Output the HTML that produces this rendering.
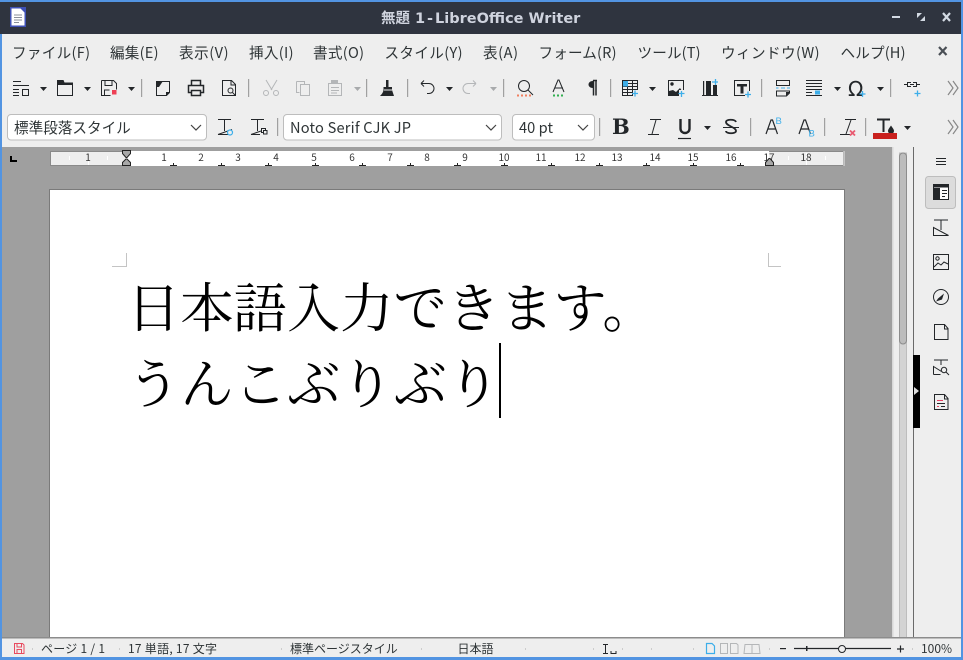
<!DOCTYPE html>
<html lang="ja"><head><meta charset="utf-8"><title>無題 1 - LibreOffice Writer</title>
<style>
html,body{margin:0;padding:0;background:#eee;width:963px;height:660px;overflow:hidden}
svg{display:block}
.m{font-family:"Noto Sans CJK JP",sans-serif;font-size:14.6px;fill:#2e3436}
.c{font-family:"Noto Sans CJK JP",sans-serif;font-size:14.6px;fill:#2e3436}
.s{font-family:"Noto Sans CJK JP",sans-serif;font-size:12px;fill:#2e3436}
.r{font-family:"Noto Sans CJK JP",sans-serif;font-size:10px;fill:#333;text-anchor:middle}
.d{font-family:"Noto Serif CJK JP","Noto Serif CJK SC",serif;font-size:53.3px;fill:#000}
.k{fill:none;stroke:#232629;stroke-width:1}
.g{fill:none;stroke:#b4b6b8;stroke-width:1}
.b{fill:none;stroke:#3daee9;stroke-width:1.3}
</style></head><body>
<svg width="963" height="660" viewBox="0 0 963 660" xmlns="http://www.w3.org/2000/svg">
<defs>
<path id="ar" d="M0 0h7l-3.500 4z" fill="#232629"/>
<path id="ag" d="M0 0h7l-3.500 4z" fill="#a8aaac"/>
</defs>
<rect width="963" height="660" fill="#eeeeee"/>
<!-- title -->
<rect x="0" y="2" width="963" height="32" fill="#2f343f"/>
<rect x="10" y="7" width="16" height="20" fill="#3f51b5"/><path d="M11.500 8.500h9l4 4v13h-13z" fill="#fff"/>
<path d="M14 15h8M14 17.500h8M14 20h8M14 22.500h5" stroke="#8a8f98" stroke-width="1"/>
<text x="381" y="23" class="m" style="font-size:14.5px;fill:#cfd3de;font-weight:bold">無題</text>
<text x="415" y="23" style="font-family:'DejaVu Sans',sans-serif;font-weight:bold;font-size:14.5px;fill:#cfd3de">1</text>
<text x="427" y="23" style="font-family:'DejaVu Sans',sans-serif;font-weight:bold;font-size:14.5px;fill:#cfd3de">-</text>
<text x="435" y="23" style="font-family:'DejaVu Sans',sans-serif;font-weight:bold;font-size:14.5px;fill:#cfd3de">LibreOffice Writer</text>
<rect x="892" y="16" width="8" height="2" fill="#d3dae3"/>
<path d="M917 13h5l-5 5zM925 21h-5l5-5z" fill="#d3dae3"/>
<path d="M943 13l7 8M950 13l-7 8" stroke="#d3dae3" stroke-width="2.200"/>
<!-- menu -->
<g class="m">
<text x="12" y="58" textLength="78">ファイル(F)</text><text x="110" y="58" textLength="48.500">編集(E)</text><text x="179" y="58" textLength="49.500">表示(V)</text><text x="249" y="58" textLength="44.500">挿入(I)</text><text x="313" y="58" textLength="51">書式(O)</text><text x="384.500" y="58" textLength="78">スタイル(Y)</text><text x="483" y="58" textLength="35">表(A)</text><text x="538.500" y="58" textLength="78">フォーム(R)</text><text x="637.500" y="58" textLength="63">ツール(T)</text><text x="721" y="58" textLength="98.500">ウィンドウ(W)</text><text x="840.500" y="58" textLength="65">ヘルプ(H)</text>
</g>
<path d="M939 47l7.500 8M946.500 47l-7.500 8" stroke="#4a4f55" stroke-width="2.200"/>
<!-- toolbar 1 -->
<g class="k">
<path d="M13 81.500h8M13 85.500h16M13 89.500h6M13 92.500h6M13 95.500h6M22.500 89.500h6v6h-6z"/>
<path d="M57.500 84.500v11h15v-11"/>
<path d="M101.500 80.500h12l3 3v6M101.500 80.500v15h9M105 81v4.500h7V81M104.500 95v-5h5"/>
<path d="M156.500 81.500h13v11l-3 3h-10z"/>
</g>
<path d="M57 80h6.500l1 2.500H73v2.500H57z" fill="#232629"/>
<rect x="112" y="90" width="4.500" height="4.500" fill="#ee4055"/>
<path d="M156 81h7l-4 6h-3z" fill="#232629"/><path d="M166 96l4-4h-4z" fill="#232629"/>
<use href="#ar" x="40" y="87"/><use href="#ar" x="84" y="87"/><use href="#ar" x="128" y="87"/>
<g class="k">
<path d="M191.500 85v-4.500h9V85M191.500 92.500h-3v-7h15v7h-3M191.500 90.500h9v5h-9z" stroke-width="1.500"/>
<path d="M222.500 80.500h9l4 4v11h-13zM231 81v4h4"/><circle cx="230.500" cy="90.500" r="2.500"/><path d="M232.500 92.500l3 3"/>
</g>
<g class="g">
<path d="M266 80l6 10M277 80l-6 10"/><circle cx="266" cy="93" r="2.500"/><circle cx="276" cy="93" r="2.500"/>
<path d="M296.500 81.500h8v3M296.500 81.500v11h3M300.500 84.500h9v11h-9z"/>
<path d="M328.500 83.500h13v12h-13zM331 87.500h8M331 90.500h8M331 93h6"/>
</g>
<rect x="331" y="80" width="7" height="3" fill="#b4b6b8"/>
<use href="#ag" x="354" y="87"/>
<path d="M386 80h2.500v7H392v3l2 6h-14c1.500-1.500 3-3 3.500-6v-3H386z" fill="#232629"/><rect x="384" y="89.500" width="8" height="1" fill="#eee"/>
<path class="k" d="M421 83.500h8a4.500 4.500 0 0 1 0 10h-2M421 83.500l3-3M421 83.500l3 3"/>
<use href="#ar" x="446" y="87"/>
<path class="g" d="M476 83.500h-8a4.500 4.500 0 0 0 0 10h2M476 83.500l-3-3M476 83.500l-3 3"/>
<use href="#ag" x="490" y="87"/>
<circle class="k" cx="524" cy="86" r="5.500"/><path class="k" d="M528 90l5 5"/>
<path d="M517 95.500h2M521 95.500h2M525 95.500h2M529 95.500h2" stroke="#f08060" stroke-width="2"/>
<path class="k" d="M553 92l5-12h1l5 12M555 88h8"/>
<path d="M553 95.500h2M557 95.500h2M561 95.500h2" stroke="#30b050" stroke-width="2"/>
<path d="M593 80.500h4M593.500 80.500v15M596 80.500v15" stroke="#232629" stroke-width="1.500"/><path d="M593 81c-6 0-6 7 0 7z" fill="#232629"/>
<path class="k" d="M622.500 80.500h15v15h-15zM622 83.500h16M622 86.500h16M622 89.500h16M622 92.500h16M627.500 80v16M632.500 80v16"/>
<rect x="623" y="81" width="5" height="5.500" fill="#3daee9"/>
<rect x="633" y="90" width="6" height="7" fill="#eee"/><path class="b" d="M632 93.500h6M635 90.500v6"/>
<use href="#ar" x="649" y="87"/>
<rect x="668.500" y="80.500" width="15" height="15" class="k"/><circle cx="672" cy="84" r="1.700" fill="#232629"/><path d="M669 96v-5l4-1 3 2 4-4 2 3-2 3-2 2z" fill="#232629"/>
<rect x="679" y="90" width="6" height="7" fill="#eee"/><path class="b" d="M678.500 93.500h6M681.500 91v6"/>
<path d="M702 95.500h16" stroke="#232629" stroke-width="1"/><rect x="703" y="81" width="1.200" height="14" fill="#232629"/><rect x="706" y="81" width="5" height="14" fill="#232629"/><rect x="713" y="85" width="4" height="10" fill="#232629"/>
<path class="b" d="M712 82h6M715.500 79v6"/>
<rect x="734.500" y="80.500" width="15" height="15" class="k"/><path d="M737 84h10v2.500h-3.500v7h-3v-7H737z" fill="#232629"/>
<rect x="745" y="91" width="7" height="6" fill="#eee"/><path class="b" d="M745 94.500h6M748 91.500v6"/>
<path class="k" d="M776.500 80.500h13v5h-13zM776.500 91v5h10l3-3v-2z" style="stroke:#232629"/>
<path d="M786 96l4-4h-4z" fill="#232629"/>
<path d="M776 88h2.500M781 88h4M787 88h3" stroke="#3daee9" stroke-width="1"/>
<path class="k" d="M806 80.500h16M806 83.500h16M806 86.500h16M806 89.500h16M806 92.500h6M806 95.500h16"/>
<rect x="815" y="90.500" width="5" height="4" fill="#3daee9"/>
<use href="#ar" x="834" y="87"/>
<text x="848" y="96" style="font-family:'DejaVu Sans','Liberation Sans',sans-serif;font-size:20px;fill:#232629">Ω</text>
<path class="b" d="M859.500 94h6M862.500 91v6"/>
<use href="#ar" x="877" y="87"/>
<path class="k" d="M904 84.500h3M917 84.500h3M910 84.500h4M911 82.500h-3.500v4h3.500M913 82.500h3.500v4h-3.500"/>
<path class="b" d="M914.500 93.500h6M917.500 90.500v6"/>
<path d="M948 81l5 7-5 7M953 81l5 7-5 7" fill="none" stroke="#888" stroke-width="1.200"/>
<g fill="#a0a0a0">
<rect x="141" y="79" width="1.200" height="18"/><rect x="248" y="79" width="1.200" height="18"/><rect x="366" y="79" width="1.200" height="18"/><rect x="407" y="79" width="1.200" height="18"/><rect x="503" y="79" width="1.200" height="18"/><rect x="610" y="79" width="1.200" height="18"/><rect x="761" y="79" width="1.200" height="18"/><rect x="890" y="79" width="1.200" height="18"/>
<rect x="277" y="118" width="1.200" height="18"/><rect x="599" y="118" width="1.200" height="18"/><rect x="750" y="118" width="1.200" height="18"/><rect x="824" y="118" width="1.200" height="18"/><rect x="865" y="118" width="1.200" height="18"/>
</g>
<!-- toolbar 2 -->
<g fill="#fff" stroke="#bdbdbd">
<rect x="7.500" y="114.500" width="199" height="25.500" rx="3.500"/>
<rect x="283.500" y="114.500" width="218" height="25.500" rx="3.500"/>
<rect x="512.500" y="114.500" width="82" height="25.500" rx="3.500"/>
</g>
<text x="14" y="133" class="c">標準段落スタイル</text>
<text x="290" y="133" class="c" textLength="121">Noto Serif CJK JP</text>
<text x="519" y="133" class="c" textLength="34">40 pt</text>
<path d="M191 125l5 5 5-5M486 125l5 5 5-5M578 125l5 5 5-5" fill="none" stroke="#444" stroke-width="1.200"/>
<path d="M218 119.500h13M224.500 119.500V131M218 134.500l14-5M218 134.500h10" class="k"/>
<circle cx="230" cy="132.500" r="2.500" fill="#eee" stroke="#3daee9" stroke-width="1.200"/>
<path d="M251 119.500h13M257.500 119.500V131M251 134.500l10-3.500M251 134.500h9" class="k"/>
<rect x="261.500" y="128.500" width="4" height="4" class="k"/><rect x="263.500" y="130.500" width="3.500" height="3.500" class="k" style="fill:#eee"/>
<text x="612" y="134" style="font-family:'DejaVu Serif','Liberation Serif',serif;font-weight:bold;font-size:21px;fill:#232629">B</text>
<path d="M650 119.500h11M648 134.500h11M656 120l-4 14" class="k"/>
<path d="M680.500 119v9.500c0 6 9 6 9 0V119" fill="none" stroke="#232629" stroke-width="2.400"/><path d="M678 138.500h13" stroke="#232629" stroke-width="1.200"/>
<use href="#ar" x="704" y="126"/>
<path d="M736 122c-1-3-10-3-10 0 0 4 10 5 10 9 0 3-10 3-10 0" fill="none" stroke="#232629" stroke-width="1.800"/><path d="M723 127.500h16" stroke="#232629" stroke-width="1"/>
<path d="M766 134l5-14h1.500l5 14M768 129h8" fill="none" stroke="#232629" stroke-width="1.200"/><text x="775.500" y="124" style="font-family:'Liberation Sans',sans-serif;font-size:9.500px;fill:#3daee9">B</text>
<path d="M799 134l5-14h1.500l5 14M801 129h8" fill="none" stroke="#232629" stroke-width="1.200"/><text x="808.500" y="136.500" style="font-family:'Liberation Sans',sans-serif;font-size:9.500px;fill:#3daee9">B</text>
<path class="k" d="M845 119.500h11M840 134.500h10M851 120l-5 14"/>
<path d="M850 130.500l5 5M855 130.500l-5 5" stroke="#e85a70" stroke-width="1.800"/>
<path d="M877 119.500h13M883.500 119.500V132" stroke="#232629" stroke-width="2"/>
<path d="M891 125.500c2 3 3 4 3 5.500a3 3 0 0 1-6 0c0-1.500 1-2.500 3-5.500z" fill="#232629"/>
<rect x="873" y="133" width="24" height="6" fill="#c9211e"/>
<use href="#ar" x="904" y="126"/>
<path d="M948 120l5 7-5 7M953 120l5 7-5 7" fill="none" stroke="#888" stroke-width="1.200"/>
<!-- workspace -->
<rect x="0" y="147" width="893" height="491" fill="#9f9f9f"/>
<path d="M11 156v5h6" fill="none" stroke="#000" stroke-width="2"/>
<!-- ruler -->
<rect x="50.500" y="151.500" width="793" height="14" fill="#eeeeee" stroke="#8a8a8a"/>
<rect x="843.500" y="151" width="1" height="15" fill="#e8e8e8"/>
<rect x="126" y="151" width="643" height="15" fill="#fff"/>
<g fill="#fff"><rect x="69" y="156" width="1" height="4"/><rect x="88" y="153" width="1" height="12"/><rect x="107" y="156" width="1" height="4"/><rect x="788" y="156" width="1" height="4"/><rect x="806" y="153" width="1" height="12"/><rect x="825" y="156" width="1" height="4"/></g>
<g class="r">
<text x="88" y="161">1</text><text x="164" y="161">1</text><text x="201" y="161">2</text><text x="238" y="161">3</text><text x="276" y="161">4</text><text x="314" y="161">5</text><text x="352" y="161">6</text><text x="390" y="161">7</text><text x="427" y="161">8</text><text x="465" y="161">9</text><text x="504" y="161">10</text><text x="541" y="161">11</text><text x="580" y="161">12</text><text x="617" y="161">13</text><text x="655" y="161">14</text><text x="693" y="161">15</text><text x="731" y="161">16</text><text x="769" y="161">17</text><text x="806" y="161">18</text>
</g>
<path d="M173.500 163v2M221.500 163v2M268.500 163v2M315.500 163v2M362.500 163v2M410.500 163v2M457.500 163v2M504.500 163v2M551.500 163v2M599.500 163v2M646.500 163v2M693.500 163v2M740.500 163v2M170 165.500h7M218 165.500h7M265 165.500h7M312 165.500h7M359 165.500h7M407 165.500h7M454 165.500h7M501 165.500h7M548 165.500h7M596 165.500h7M643 165.500h7M690 165.500h7M737 165.500h7" stroke="#222" stroke-width="1" fill="none"/>
<path d="M122.500 150.500h8v3l-3.500 4-1 0-3.500-4zM122.500 165.500h8v-3l-3.500-3.500-1 0-3.500 3.500zM765.500 165.500h8v-3l-3.500-4-1 0-3.500 4z" fill="#a8a8a8" stroke="#222" stroke-width="1"/>
<!-- page -->
<rect x="49.500" y="189.500" width="795" height="460" fill="#fff" stroke="#7a7a7a"/>
<path d="M126.500 253v13.500H112M768.500 253v13.500H781" fill="none" stroke="#c4c4c4" stroke-width="1"/>
<text x="127" y="327" class="d">日本語入力できます。</text>
<text x="127" y="403" class="d">うんこぶりぶり</text>
<rect x="499" y="343" width="2" height="75" fill="#000"/>
<!-- scrollbar + sidebar -->
<rect x="892" y="147" width="1.500" height="491" fill="#d8d8d8"/>
<rect x="893.500" y="147" width="19.500" height="491" fill="#eeeeee"/>
<rect x="899.500" y="153" width="7" height="490" fill="#d3d3d3" stroke="#bdbdbd" stroke-width="1"/>
<rect x="899.500" y="153" width="7" height="191" rx="3.500" fill="#bcbcbc" stroke="#8c8c8c" stroke-width="1"/>
<rect x="913" y="147" width="1" height="491" fill="#6a6a6a"/>
<rect x="913" y="355" width="7" height="73" fill="#000"/>
<path d="M914 387l5 4-5 4z" fill="#ddd"/>
<path d="M936 158.500h10M936 161.500h10M936 164.500h10" stroke="#232629" stroke-width="1"/>
<rect x="925.500" y="176.500" width="30" height="32" rx="3" fill="#dcdcdc" stroke="#bdbdbd"/>
<rect x="933.500" y="184.500" width="15" height="15" fill="#fff" stroke="#232629"/><rect x="933.500" y="184.500" width="15" height="3" fill="#232629"/><rect x="934" y="188" width="6" height="11" fill="#232629"/>
<path d="M942 190.500h5M942 193.500h5M942 196.500h3" stroke="#232629"/>
<g class="k">
<path d="M934 220h14M941 220v10M933.500 235.500v-8l15 8z"/>
<rect x="933.500" y="254.500" width="15" height="15"/><circle cx="937.500" cy="258.500" r="1.700"/><path d="M934 267l4-4 3 2 3-3 4 2"/>
<circle cx="941" cy="297" r="7.500"/>
<path d="M934.500 324.500h10l3.500 4v11h-13.500zM944.500 325v4h3.500"/>
<path d="M934 360h14M941 360v5M933.500 374.500v-8l8 5M933.500 374.500h7"/><circle cx="944" cy="370" r="2.700"/><path d="M946 372l3 3"/>
<path d="M934.500 394.500h10l3.500 4v11h-13.500zM944.500 395v4h3.500"/>
</g>
<path d="M938 298.500l6-5-2 6-6 2z" fill="#232629"/>
<path d="M937 400.500h6M937 406.500h2" stroke="#e54060" stroke-width="1"/>
<path d="M937 403.500h8M941 406.500h4" stroke="#232629" stroke-width="1"/>
<!-- status -->
<rect x="0" y="637" width="963" height="1.500" fill="#8c8c8c"/>
<rect x="2" y="638.500" width="959" height="18.500" fill="#eeeeee"/>
<path d="M14.500 643.500h8l1.500 1.500v8.500h-9.500zM17 644v3h4.500v-3M17 653v-3.500h4.500v3.500" fill="none" stroke="#e84a5f" stroke-width="1"/>
<g fill="#aaa"><rect x="32" y="648.500" width="1" height="1"/><rect x="119" y="648.500" width="1" height="1"/><rect x="281" y="648.500" width="1" height="1"/><rect x="421" y="648.500" width="1" height="1"/><rect x="525" y="648.500" width="1" height="1"/><rect x="593" y="648.500" width="1" height="1"/><rect x="622" y="648.500" width="1" height="1"/><rect x="651" y="648.500" width="1" height="1"/><rect x="693" y="648.500" width="1" height="1"/><rect x="769" y="648.500" width="1" height="1"/><rect x="912" y="648.500" width="1" height="1"/></g>
<g class="s">
<text x="41" y="653" textLength="64">ページ 1 / 1</text>
<text x="128" y="653" textLength="89">17 単語, 17 文字</text>
<text x="290" y="653">標準ページスタイル</text>
<text x="457.500" y="653">日本語</text>
<text x="921" y="653">100%</text>
</g>
<path d="M603 644.500h5M603 653.500h5M605.500 644.500v9M611 651v2.500h5v-2.500" fill="none" stroke="#232629" stroke-width="1"/>
<path d="M706.500 643.500h5.500l2.500 2.500v7.500h-8z" fill="none" stroke="#3daee9" stroke-width="1.200"/>
<path d="M720.500 643.500h7v10h-7zM730.500 643.500h6l1.500 1.500v8.500h-7.500zM745 644.500h7v9h-8zM752 644.500h7l1 9h-8z" fill="none" stroke="#b4b6b8" stroke-width="1"/>
<rect x="780" y="648" width="6" height="1.200" fill="#232629"/>
<path d="M794 648.500h97" stroke="#232629" stroke-width="1.200"/><rect x="806" y="646" width="1.500" height="5" fill="#232629"/>
<circle cx="842" cy="649" r="3.500" fill="#eee" stroke="#232629" stroke-width="1"/>
<path d="M897 649h7M900.500 645.500v7" stroke="#232629" stroke-width="1.200"/>
<!-- window border -->
<rect x="0" y="0" width="963" height="2" fill="#5294e2"/>
<rect x="0" y="34" width="2" height="626" fill="#5294e2"/>
<rect x="961" y="2" width="2" height="658" fill="#5294e2"/>
<rect x="0" y="657" width="963" height="3" fill="#5294e2"/>
</svg>
</body></html>
